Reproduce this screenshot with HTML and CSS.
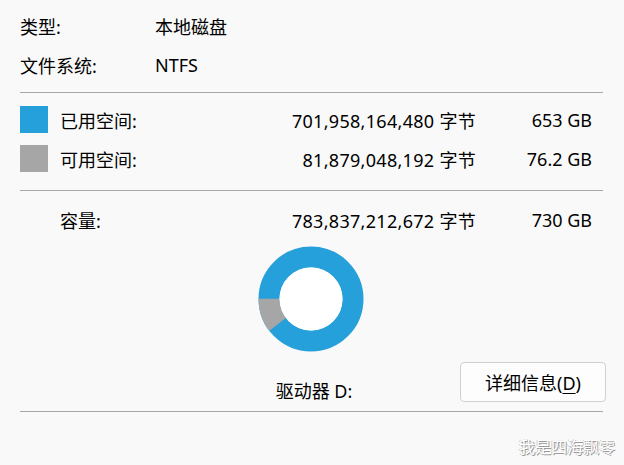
FILE: index.html
```html
<!DOCTYPE html>
<html lang="zh-CN">
<head>
    <meta charset="UTF-8">
    <meta name="viewport" content="width=device-width, initial-scale=1.0">
    <title>本地磁盘 属性</title>
    <link rel="stylesheet" href="styles.css">
</head>
<body>
    <div class="panel">
        <div class="info">
            <span>类型:</span>
            <span>本地磁盘</span>
            <span>文件系统:</span>
            <span>NTFS</span>
        </div>

        <hr class="sep">

        <div class="space">
            <div class="space-row">
                <span class="swatch used"></span>
                <span class="label">已用空间:</span>
                <span class="bytes">701,958,164,480 字节</span>
                <span class="size">653 GB</span>
            </div>
            <div class="space-row">
                <span class="swatch free"></span>
                <span class="label">可用空间:</span>
                <span class="bytes">81,879,048,192 字节</span>
                <span class="size">76.2 GB</span>
            </div>
        </div>

        <hr class="sep">

        <div class="space-row capacity">
            <span></span>
            <span class="label">容量:</span>
            <span class="bytes">783,837,212,672 字节</span>
            <span class="size">730 GB</span>
        </div>

        <div class="chart">
            <!-- 已用 89.6%，可用 10.4% -->
            <svg width="106" height="106" viewBox="0 0 106 106">
                <circle cx="53" cy="53" r="42" fill="none" stroke="#26a0da" stroke-width="21"/>
                <circle cx="53" cy="53" r="42" fill="none" stroke="#a6a6a6" stroke-width="21"
                        stroke-dasharray="27.6 236.3" stroke-dashoffset="-104.4"/>
                <circle cx="53" cy="53" r="31.5" fill="#fff"/>
            </svg>
        </div>

        <div class="drive-row">
            <span></span>
            <span class="drive">驱动器 D:</span>
            <button class="details" type="button">详细信息(<u>D</u>)</button>
        </div>

        <hr class="sep">
    </div>

    <div class="watermark">我是四海飘零</div>
</body>
</html>
```

FILE: styles.css
```css
* {
    margin: 0;
    padding: 0;
    box-sizing: border-box;
}

body {
    background: #f9f9f9;
    color: #000;
    font-family: "Noto Sans", "Noto Sans CJK SC", sans-serif;
    font-size: 18px;
    width: 624px;
    height: 465px;
    overflow: hidden;
    position: relative;
}

.panel {
    padding: 6px 21px 0 20px;
}

.info {
    display: grid;
    grid-template-columns: 135px 1fr;
    grid-auto-rows: 39px;
    align-items: center;
}

.sep {
    border: none;
    border-top: 1px solid #a8a8a8;
}

.info + .sep {
    margin-top: 8px;
}

.space {
    padding: 7px 0 12px;
}

.space-row {
    display: grid;
    grid-template-columns: 28px 1fr auto 116px;
    height: 39px;
    align-items: center;
    padding-right: 11px;
}

.swatch {
    width: 28px;
    height: 27px;
}

.swatch.used {
    background: #26a0da;
}

.swatch.free {
    background: #a6a6a6;
}

.label {
    padding-left: 12px;
}

.bytes,
.size {
    text-align: right;
}

.bytes {
    letter-spacing: 0.3px;
}

.capacity {
    margin-top: 9px;
}

.chart {
    display: flex;
    justify-content: center;
    margin-top: 7px;
    padding-right: 2px;
}

.chart svg {
    display: block;
}

.drive-row {
    display: grid;
    grid-template-columns: 1fr auto 1fr;
    height: 40px;
    margin: 10px -3px 9px 0;
}

.drive {
    align-self: end;
    line-height: 22px;
    padding-left: 2px;
}

.details {
    justify-self: end;
    width: 146px;
    height: 40px;
    background: #fdfdfd;
    border: 1px solid #d0d0d0;
    border-radius: 4px;
    font-family: inherit;
    font-size: 18px;
    color: #000;
}

.details u {
    text-decoration-thickness: 1px;
    text-underline-offset: 3px;
}

.watermark {
    position: absolute;
    right: 9px;
    bottom: 11px;
    font-family: "Noto Sans CJK SC", sans-serif;
    font-size: 16px;
    line-height: 16px;
    color: #fff;
    text-shadow: 1px 1px 0 #9a9a9a, -1px 0 0 #c8c8c8;
}
```
